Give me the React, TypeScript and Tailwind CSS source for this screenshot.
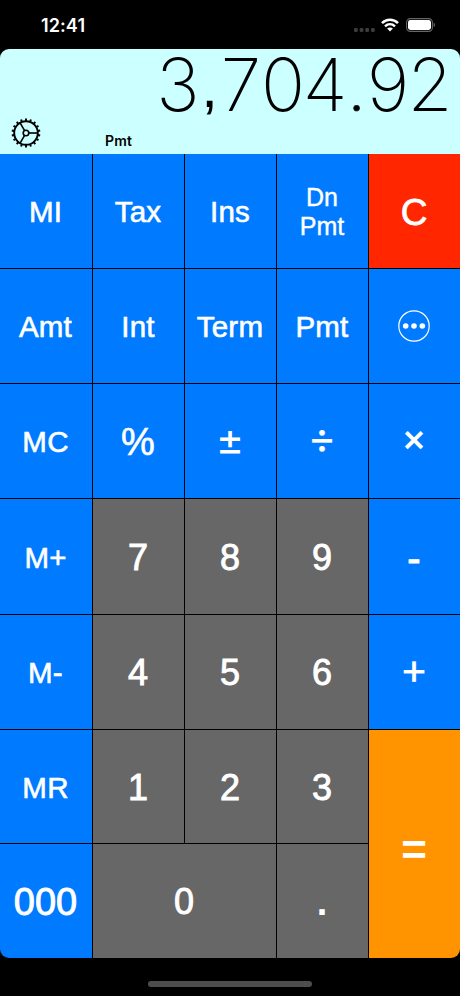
import type { ReactNode } from "react";

type KeyProps = {
  children: ReactNode;
  className?: string;
};

const label =
  "bg-[#007aff] text-[29.5px] leading-none tracking-[0.2px] [-webkit-text-stroke:0.6px_white]";
const digit = "bg-[#676767] text-[36px] leading-none [-webkit-text-stroke:0.9px_white]";
const operator =
  "bg-[#007aff] pb-[10px] font-[Inter,sans-serif] text-[43px] leading-none [-webkit-text-stroke:0.2px_white]";

function Key({ children, className = label }: KeyProps) {
  return (
    <button
      className={`flex items-center justify-center pr-px pt-[2px] text-center text-white ${className}`}
    >
      {children}
    </button>
  );
}

function GearIcon() {
  const teeth = Array.from({ length: 18 }, (_, i) => i * 20);
  return (
    <svg width="30" height="30" viewBox="-15 -15 30 30" fill="none" stroke="black">
      <circle r="11.8" strokeWidth="1.9" />
      <circle r="2.8" strokeWidth="1.6" />
      {[0, 120, 240].map((a) => (
        <path key={a} d="M2.8 0H11.8" strokeWidth="1.6" transform={`rotate(${a})`} />
      ))}
      {teeth.map((a) => (
        <path key={a} d="M12 0H14.4" strokeWidth="2" transform={`rotate(${a + 10})`} />
      ))}
    </svg>
  );
}

function StatusBar() {
  return (
    <div className="flex h-[49px] items-center pl-[41px] pr-[24px] text-white">
      <span className="pt-[3px] font-[Inter,sans-serif] text-[18px] font-semibold leading-none tracking-[0.1px]">
        12:41
      </span>
      <div className="ml-auto flex items-center pt-[1px]">
        <svg width="22" height="6" viewBox="0 0 22 6" fill="#3c3c3c" className="mr-[6px] mt-[9px]">
          <rect x="1" y="1" width="3.7" height="4" rx="1.3" />
          <rect x="6.7" y="1" width="3.7" height="4" rx="1.3" />
          <rect x="12.3" y="1" width="3.7" height="4" rx="1.3" />
          <rect x="18" y="1" width="3.7" height="4" rx="1.3" />
        </svg>
        <svg width="18" height="14" viewBox="0 0 18 14" fill="none" stroke="white" strokeWidth="2.5">
          <path d="M1 5.2C5.5 .7 12.5 .7 17 5.2" />
          <path d="M4 8.3C6.9 5.6 11.1 5.6 14 8.3" />
          <path d="M6.1 10.6C7.8 9.2 10.2 9.2 11.9 10.6L9 13.6Z" fill="white" stroke="none" />
        </svg>
        <svg width="30" height="14" viewBox="0 0 30 14" className="ml-[7px]">
          <rect x=".6" y=".6" width="25.8" height="12.8" rx="3.8" fill="none" stroke="#666" strokeWidth="1.1" />
          <rect x="2" y="2" width="23" height="10" rx="2.4" fill="white" />
          <path d="M27.7 4.8C29.4 5.4 29.4 8.6 27.7 9.2Z" fill="#666" />
        </svg>
      </div>
    </div>
  );
}

function Readout({ value }: { value: string }) {
  return (
    <div className="flex h-[72px] justify-end pr-[9px] font-[Inter,sans-serif] text-[73px] font-extralight leading-[72px]">
      {value.split("").map((c, i) => (
        <span
          key={i}
          className={
            c === ","
              ? "flex w-[21px] justify-center font-['Liberation_Sans',sans-serif] text-[60px] leading-[75px]"
              : c === "."
                ? "flex w-[21px] justify-center [-webkit-text-stroke:0.6px_black]"
                : "flex w-[42px] justify-center"
          }
        >
          {c}
        </span>
      ))}
    </div>
  );
}

function Display() {
  return (
    <div className="flex h-[105px] flex-col rounded-t-[9px] bg-[#ccffff] text-black">
      <Readout value="3,704.92" />
      <div className="flex h-[33px] pl-[11px]">
        <div className="-mt-[3px]">
          <GearIcon />
        </div>
        <span className="ml-[64px] mt-[12px] font-[Inter,sans-serif] text-[14px] font-semibold leading-[16px] tracking-[0.2px]">
          Pmt
        </span>
      </div>
    </div>
  );
}

export default function App() {
  return (
    <div className="h-[996px] w-[460px] bg-black font-['Liberation_Sans',Arial,sans-serif]">
      <StatusBar />
      <Display />
      <div className="grid grid-cols-[92px_91px_91px_91px_91px] grid-rows-[114px_114px_114px_115px_114px_113px_114px] gap-px overflow-hidden rounded-b-[9px] bg-black">
        <Key>MI</Key>
        <Key>Tax</Key>
        <Key>Ins</Key>
        <Key className="bg-[#007aff] text-[25px] leading-[29px] [-webkit-text-stroke:0.4px_white]">
          Dn
          <br />
          Pmt
        </Key>
        <Key className="bg-[#ff2600] text-[37px] leading-none [-webkit-text-stroke:0.8px_white]">C</Key>

        <Key>Amt</Key>
        <Key>Int</Key>
        <Key>Term</Key>
        <Key>Pmt</Key>
        <Key>
          <svg width="34" height="34" viewBox="0 0 34 34" fill="white" className="mb-[2px]">
            <circle cx="17" cy="17" r="15.2" fill="none" stroke="white" strokeWidth="1.2" />
            <circle cx="8.7" cy="17" r="2.8" />
            <circle cx="17" cy="17" r="2.8" />
            <circle cx="25.3" cy="17" r="2.8" />
          </svg>
        </Key>

        <Key>MC</Key>
        <Key className="bg-[#007aff] text-[38px] leading-none [-webkit-text-stroke:0.6px_white]">%</Key>
        <Key className="bg-[#007aff] pb-[5px] font-[Inter,sans-serif] text-[43px] leading-none">±</Key>
        <Key className={operator}>÷</Key>
        <Key className="bg-[#007aff] pb-[10px] font-[Inter,sans-serif] text-[38px] font-medium leading-none">
          ×
        </Key>

        <Key>M+</Key>
        <Key className={digit}>7</Key>
        <Key className={digit}>8</Key>
        <Key className={digit}>9</Key>
        <Key className="bg-[#007aff] text-[40px] leading-none [-webkit-text-stroke:0.9px_white]">-</Key>

        <Key>M-</Key>
        <Key className={digit}>4</Key>
        <Key className={digit}>5</Key>
        <Key className={digit}>6</Key>
        <Key className={operator}>+</Key>

        <Key>MR</Key>
        <Key className={digit}>1</Key>
        <Key className={digit}>2</Key>
        <Key className={digit}>3</Key>
        <Key className="row-span-2 bg-[#ff9300] text-[44px] font-bold leading-none">
          <span className="mt-[10px]">=</span>
        </Key>

        <Key className="bg-[#007aff] text-[38px] leading-none [-webkit-text-stroke:0.9px_white]">000</Key>
        <Key className="col-span-2 bg-[#676767] text-[36px] leading-none [-webkit-text-stroke:0.9px_white]">
          0
        </Key>
        <Key className="bg-[#676767] text-[38px] font-bold leading-none">.</Key>
      </div>
      <div className="mx-auto mt-[23px] h-[6px] w-[164px] rounded-full bg-[#4d4d4d]" />
    </div>
  );
}
